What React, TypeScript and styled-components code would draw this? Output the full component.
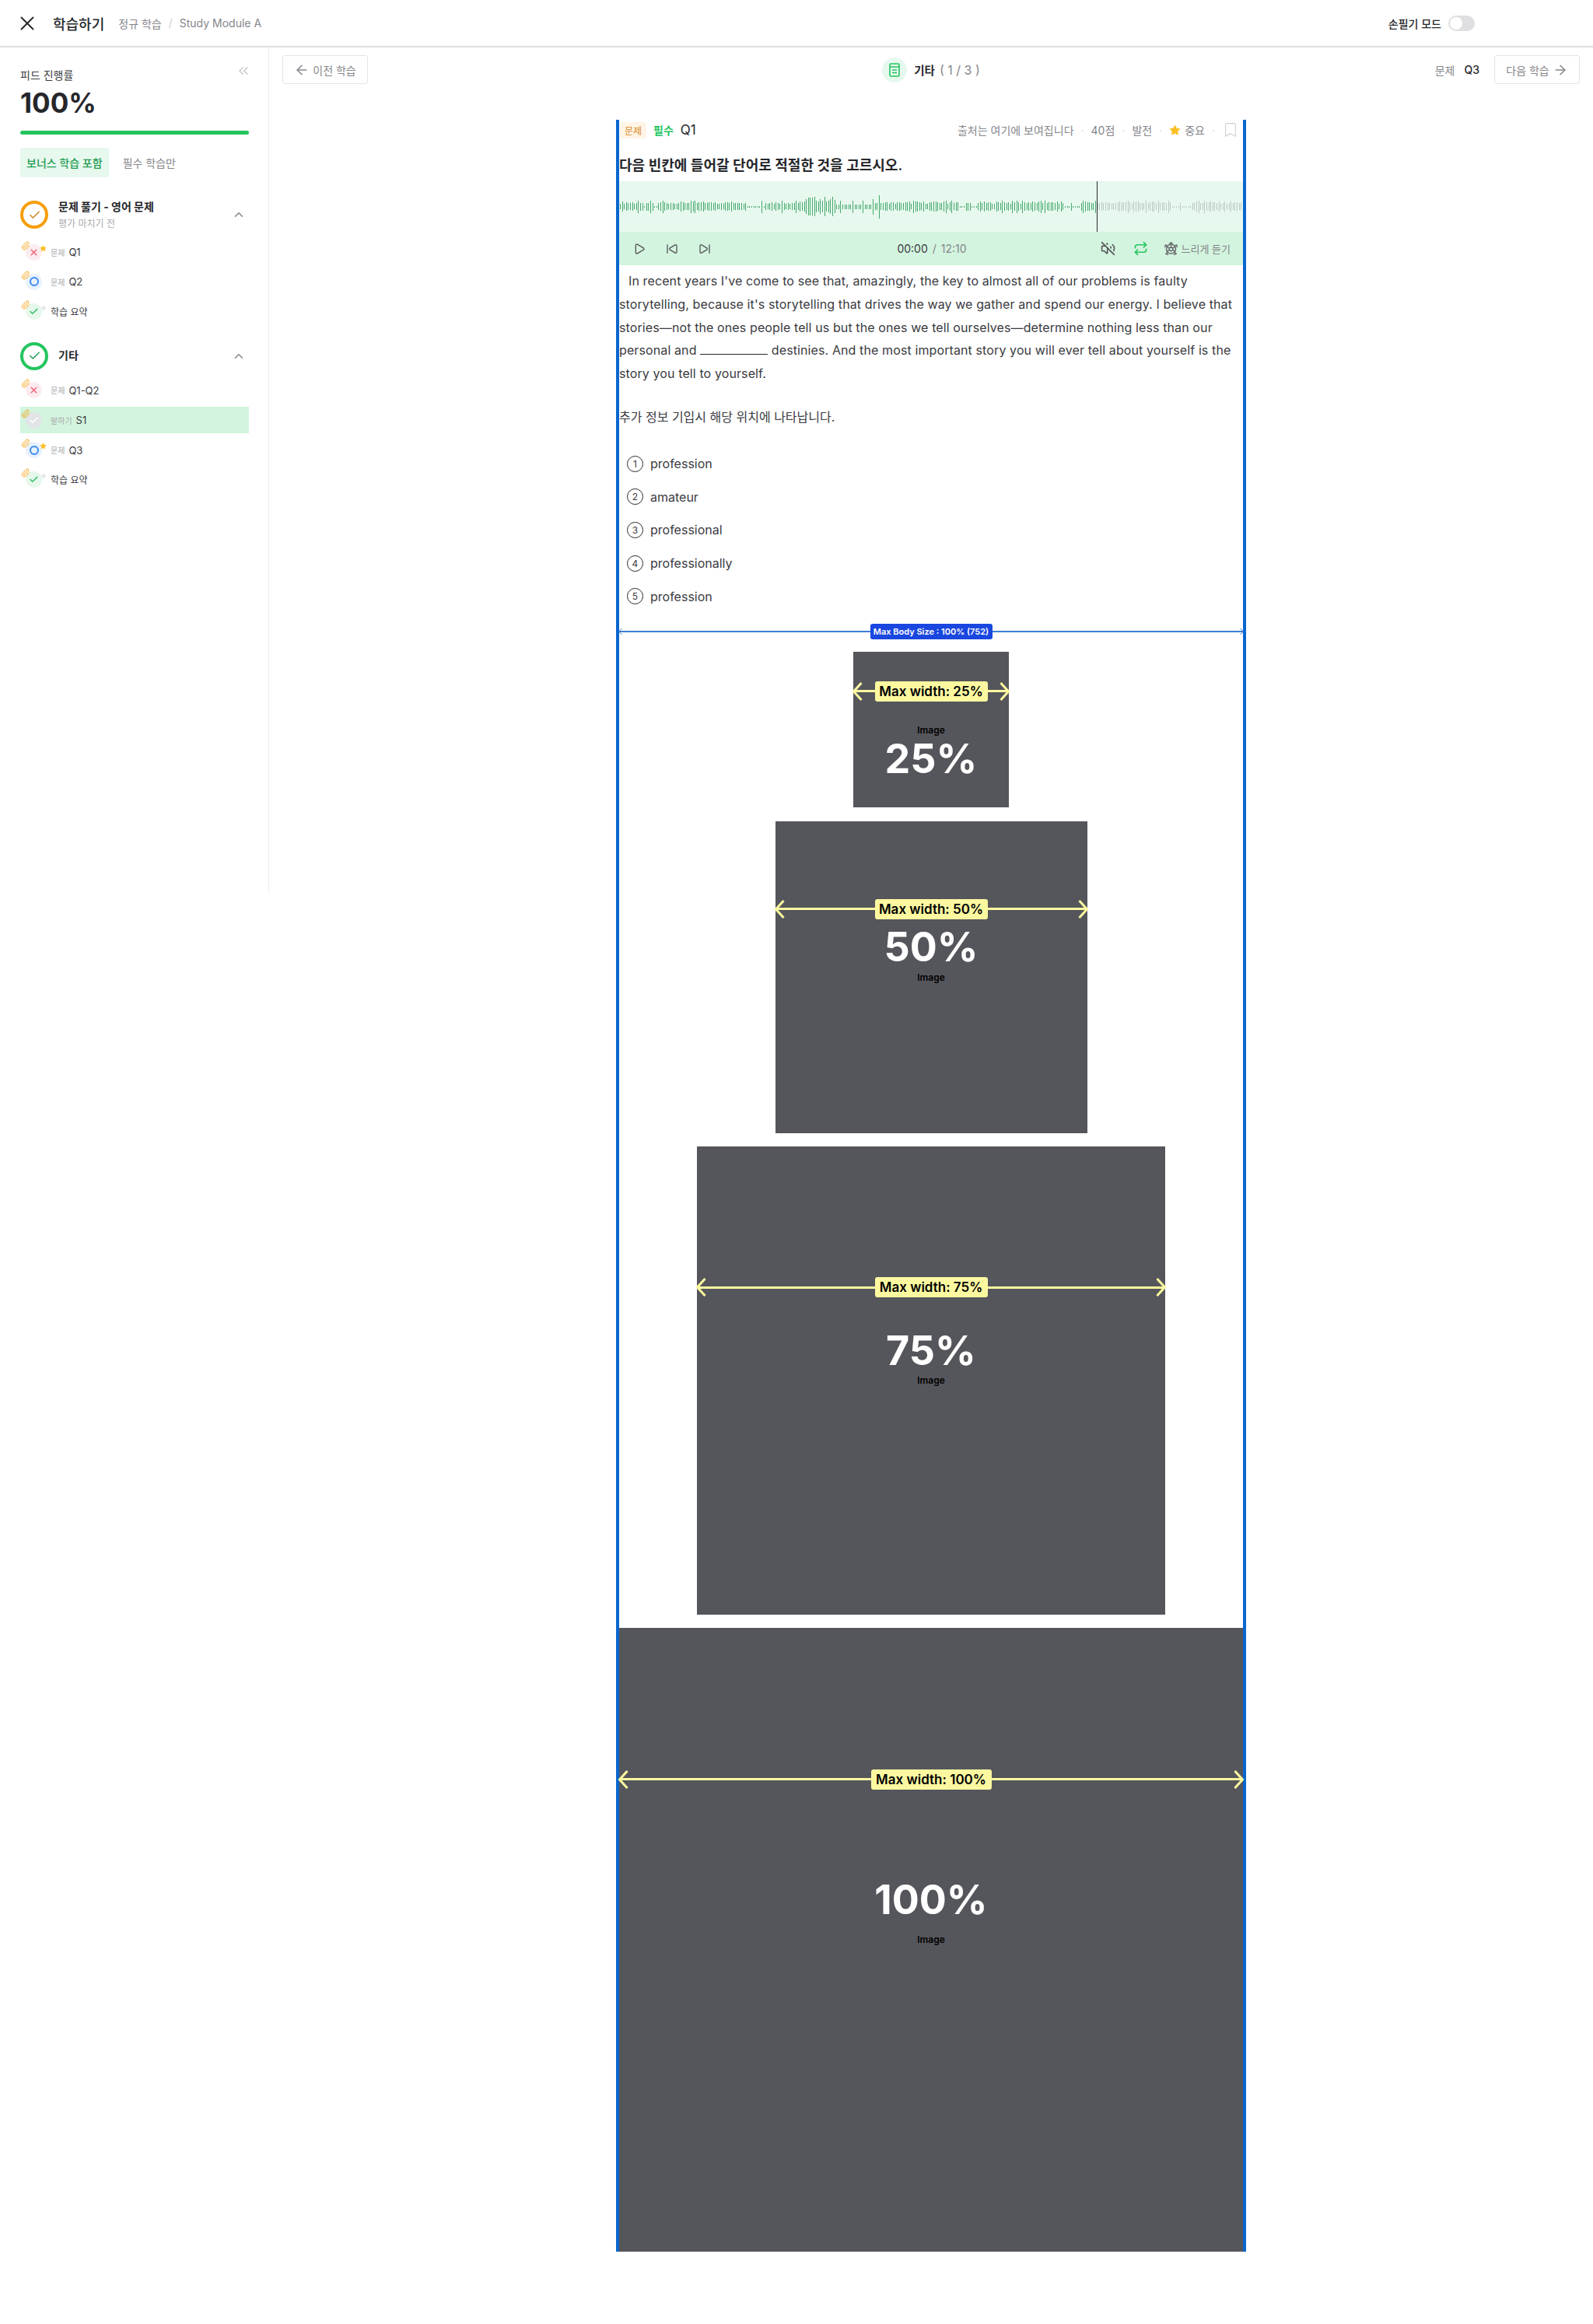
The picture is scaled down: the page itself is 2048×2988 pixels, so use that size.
import React from "react";
import styled, { createGlobalStyle } from "styled-components";
import {
  ArrowLeft,
  ArrowRight,
  Bookmark,
  Check,
  ChevronsLeft,
  ChevronUp,
  Paperclip,
  Play,
  Plus,
  Repeat,
  SkipBack,
  SkipForward,
  Star,
  VolumeOff,
  X,
} from "lucide-react";

const colors = {
  dark: "#26272b",
  text: "#3a3b3f",
  gray: "#85868b",
  light: "#a9aaae",
  line: "#e4e4e6",
  green: "#22c55e",
  greenText: "#1f9d50",
  mint: "#e7f8ee",
  mintStrong: "#d3f4de",
  orange: "#f59e0b",
  yellow: "#fbbf24",
  image: "#55565b",
  frame: "#0a66cf",
  note: "#fbf8a0",
};

const GlobalStyle = createGlobalStyle`
  html, body {
    margin: 0;
    padding: 0;
    background: #fff;
  }
  body {
    font-family: Inter, "Noto Sans CJK KR", sans-serif;
    color: ${colors.dark};
  }
  * {
    box-sizing: border-box;
  }
`;

const Page = styled.div`
  width: 2048px;
  min-height: 2988px;
`;

/* top header */
const Header = styled.header`
  display: flex;
  align-items: center;
  height: 61px;
  padding: 0 152px 0 20px;
  border-bottom: 2px solid #dedee0;
`;

const CloseButton = styled.span`
  display: flex;
  color: ${colors.dark};
  margin-right: 18px;
`;

const PageTitle = styled.h1`
  margin: 0 18px 0 0;
  font-size: 18px;
  font-weight: 500;
`;

const Crumb = styled.span`
  font-size: 14px;
  color: ${colors.gray};
`;

const CrumbDivider = styled.span`
  margin: 0 9px;
  font-size: 14px;
  color: #d0d0d3;
`;

const NoteMode = styled.label`
  display: flex;
  align-items: center;
  gap: 9px;
  margin-left: auto;
  font-size: 14px;
  font-weight: 500;
`;

const Toggle = styled.span`
  display: flex;
  align-items: center;
  width: 34px;
  height: 20px;
  padding: 2px;
  border-radius: 10px;
  background: #dfdfe1;

  &::before {
    content: "";
    width: 16px;
    height: 16px;
    border-radius: 50%;
    background: #fff;
  }
`;

const Layout = styled.div`
  display: flex;
  align-items: flex-start;
`;

/* left sidebar */
const Sidebar = styled.aside`
  flex: 0 0 346px;
  height: 1088px;
  padding: 20px 25px 0 26px;
  border-right: 1px solid #efeff0;
`;

const ProgressHead = styled.div`
  display: flex;
  justify-content: space-between;
  height: 26px;
  color: ${colors.text};
`;

const ProgressLabel = styled.span`
  margin-top: 6px;
  font-size: 14px;
  line-height: 20px;
`;

const CollapseIcon = styled.span`
  display: flex;
  margin-right: -3px;
  color: #c4c5c9;
`;

const ProgressValue = styled.div`
  margin-top: 5px;
  font-size: 35px;
  line-height: 40px;
  font-weight: 700;
`;

const ProgressTrack = styled.div`
  height: 5px;
  margin-top: 16px;
  border-radius: 3px;
  background: ${colors.green};
`;

const Tabs = styled.div`
  display: flex;
  gap: 18px;
  margin-top: 17px;
`;

const Tab = styled.span<{ $active?: boolean }>`
  display: flex;
  align-items: center;
  height: 38px;
  padding: ${(p) => (p.$active ? "0 8px" : "0")};
  border-radius: 3px;
  font-size: 14px;
  font-weight: ${(p) => (p.$active ? 500 : 400)};
  color: ${(p) => (p.$active ? colors.greenText : colors.gray)};
  background: ${(p) => (p.$active ? colors.mint : "transparent")};
`;

const Section = styled.section<{ $gap: number }>`
  margin-top: ${(p) => p.$gap}px;
`;

const SectionHead = styled.div`
  display: flex;
  align-items: center;
  gap: 13px;
  height: 36px;
`;

const StatusRing = styled.span<{ $tone: string; $check: string }>`
  display: flex;
  align-items: center;
  justify-content: center;
  width: 36px;
  height: 36px;
  border: 4px solid ${(p) => p.$tone};
  border-radius: 50%;
  color: ${(p) => p.$check};
`;

const SectionText = styled.div`
  flex: 1;
  margin-top: -1px;
`;

const SectionTitle = styled.div`
  font-size: 14px;
  line-height: 20px;
  font-weight: 700;
`;

const SectionSub = styled.div`
  margin-top: 4px;
  font-size: 12px;
  line-height: 16px;
  color: ${colors.light};
`;

const SectionChevron = styled.span`
  display: flex;
  margin-right: 4px;
  color: ${colors.gray};
`;

const RowList = styled.div<{ $top: number }>`
  display: flex;
  flex-direction: column;
  gap: 4.4px;
  margin-top: ${(p) => p.$top}px;
`;

const Row = styled.div<{ $active?: boolean }>`
  display: flex;
  align-items: center;
  height: 34px;
  padding-left: 7px;
  background: ${(p) => (p.$active ? colors.mintStrong : "transparent")};
`;

const RowIcon = styled.span<{ $bg: string; $fg: string }>`
  position: relative;
  display: flex;
  align-items: center;
  justify-content: center;
  flex: 0 0 21px;
  height: 21px;
  margin-right: 11px;
  border-radius: 50%;
  background: ${(p) => p.$bg};
  color: ${(p) => p.$fg};
`;

const RingMark = styled.span`
  width: 12px;
  height: 12px;
  border: 2.5px solid #3b8bf0;
  border-radius: 50%;
`;

const ClipBadge = styled.span`
  position: absolute;
  left: -6px;
  top: -4px;
  display: flex;
  color: ${colors.orange};
`;

const CornerBadge = styled.span<{ $color: string }>`
  position: absolute;
  left: 18px;
  top: 1px;
  display: flex;
  color: ${(p) => p.$color};
`;

const RowKind = styled.span`
  margin-right: 5px;
  font-size: 10px;
  color: ${colors.light};
`;

const RowName = styled.span<{ $plain?: boolean }>`
  font-size: ${(p) => (p.$plain ? 12 : 13)}px;
  color: ${colors.text};
`;

/* main column */
const Main = styled.main`
  flex: 1;
  min-width: 0;
  padding-top: 10px;
`;

const TopBar = styled.div`
  display: grid;
  grid-template-columns: 1fr auto 1fr;
  align-items: center;
  height: 37px;
  padding: 0 17px;
`;

const NavButton = styled.button`
  display: flex;
  align-items: center;
  justify-content: center;
  gap: 4px;
  width: 110px;
  height: 37px;
  padding: 0;
  border: 1px solid ${colors.line};
  border-radius: 3px;
  background: #fff;
  font-family: inherit;
  font-size: 14px;
  color: ${colors.gray};
`;

const Position = styled.div`
  display: flex;
  align-items: center;
  font-size: 14.5px;
`;

const PositionIcon = styled.span`
  display: flex;
  align-items: center;
  justify-content: center;
  width: 32px;
  height: 32px;
  margin-right: 9px;
  border-radius: 50%;
  background: ${colors.mint};
`;

const PositionName = styled.span`
  font-weight: 600;
`;

const PositionCount = styled.span`
  margin-left: 6px;
  font-size: 16px;
  color: ${colors.gray};
`;

const NextGroup = styled.div`
  display: flex;
  align-items: center;
  justify-content: flex-end;
`;

const NextKind = styled.span`
  margin-right: 12px;
  font-size: 14px;
  color: ${colors.gray};
`;

const NextName = styled.span`
  margin-right: 19px;
  font-size: 14px;
  font-weight: 500;
`;

const QuestionFrame = styled.article`
  width: 810px;
  margin: 46px auto 0;
  border-left: 4px solid ${colors.frame};
  border-right: 4px solid ${colors.frame};
`;

const MetaRow = styled.div`
  display: flex;
  align-items: center;
  height: 26px;
  padding: 0 5px 0 1px;
`;

const KindTag = styled.span`
  display: flex;
  align-items: center;
  justify-content: center;
  width: 34px;
  height: 21px;
  margin-right: 9px;
  border-radius: 3px;
  background: #fff4e6;
  font-size: 12px;
  color: #d98a1f;
`;

const RequiredTag = styled.span`
  margin-right: 9px;
  font-size: 14px;
  font-weight: 600;
  color: ${colors.green};
`;

const QuestionNo = styled.span`
  font-size: 17px;
`;

const MetaInfo = styled.div`
  display: flex;
  align-items: center;
  margin-left: auto;
  font-size: 14px;
  color: ${colors.gray};
`;

const MetaDot = styled.span`
  margin: 0 9px;
  color: #d8d8da;
`;

const StarIcon = styled.span`
  display: flex;
  margin-right: 5px;
  color: ${colors.yellow};
`;

const BookmarkIcon = styled.span`
  display: flex;
  color: #d4d5d8;
`;

const QuestionTitle = styled.h2`
  margin: 20px 0 7px;
  font-size: 18px;
  line-height: 26px;
  font-weight: 600;
`;

const WaveBand = styled.div`
  position: relative;
  height: 65px;
  background: ${colors.mint};
`;

const WaveDrawing = styled.svg`
  display: block;
`;

const PlayHead = styled.span`
  position: absolute;
  top: 0;
  bottom: 0;
  left: 614px;
  width: 1px;
  background: #2a2b2e;
`;

const Controls = styled.div`
  display: grid;
  grid-template-columns: 1fr auto 1fr;
  align-items: center;
  height: 43px;
  padding: 0 16px 0 18px;
  background: ${colors.mintStrong};
`;

const Transport = styled.div`
  display: flex;
  align-items: center;
  gap: 26px;
  color: #55565b;
`;

const TimeText = styled.div`
  font-size: 14px;
  color: ${colors.text};
`;

const TimeTotal = styled.span`
  margin-left: 6px;
  word-spacing: 2px;
  color: ${colors.gray};
`;

const PlayerOptions = styled.div`
  display: flex;
  align-items: center;
  justify-content: flex-end;
`;

const OptionIcon = styled.span<{ $color: string; $gap: number }>`
  display: flex;
  margin-right: ${(p) => p.$gap}px;
  color: ${(p) => p.$color};
`;

const SlowLabel = styled.span`
  font-size: 13px;
  color: ${colors.gray};
`;

const Passage = styled.p`
  margin: 6px 0 0;
  font-size: 16px;
  line-height: 29.8px;
  letter-spacing: 0.11px;
  color: ${colors.text};
  text-indent: 12px;
`;

const Blank = styled.span`
  display: inline-block;
  width: 87px;
  border-bottom: 1px solid ${colors.dark};
`;

const ExtraNote = styled.p`
  margin: 25px 0 0;
  font-size: 16px;
  line-height: 30px;
  color: ${colors.text};
`;

const Choices = styled.ol`
  margin: 24px 0 0;
  padding: 0 0 0 10px;
  list-style: none;
`;

const Choice = styled.li`
  display: flex;
  align-items: center;
  gap: 9px;
  height: 42.6px;
  font-size: 16px;
  color: ${colors.text};
`;

const ChoiceNumber = styled.span`
  display: flex;
  align-items: center;
  justify-content: center;
  width: 21px;
  height: 21px;
  border: 1.6px solid ${colors.dark};
  border-radius: 50%;
  font-size: 12px;
`;

const Dimension = styled.div<{ $height: number }>`
  position: relative;
  display: flex;
  align-items: center;
  justify-content: center;
  height: ${(p) => p.$height}px;
`;

const BodyRuler = styled(Dimension)`
  margin-top: 14px;
`;

const DimensionLine = styled.span<{ $color: string; $weight: number }>`
  position: absolute;
  left: 0;
  right: 0;
  top: 50%;
  height: ${(p) => p.$weight}px;
  margin-top: ${(p) => -p.$weight / 2}px;
  background: ${(p) => p.$color};
`;

const DimensionHead = styled.svg<{ $side: "left" | "right" }>`
  position: absolute;
  top: 50%;
  transform: translateY(-50%);
  ${(p) => p.$side}: -2px;
`;

const BodyBadge = styled.span`
  position: relative;
  display: flex;
  align-items: center;
  justify-content: center;
  width: 157px;
  height: 20px;
  border-radius: 3px;
  background: #1a47e0;
  font-size: 11px;
  font-weight: 600;
  color: #fff;
`;

const WidthBadge = styled.span<{ $wide?: boolean }>`
  position: relative;
  display: flex;
  align-items: center;
  justify-content: center;
  width: ${(p) => (p.$wide ? 155 : 145)}px;
  height: 26px;
  border-radius: 3px;
  background: ${colors.note};
  font-size: 17px;
  font-weight: 600;
  color: #000;
`;

const ImageStack = styled.div`
  display: flex;
  flex-direction: column;
  align-items: center;
  gap: 17.33px;
  margin-top: 16px;
`;

const ImageBox = styled.figure<{ $width: number }>`
  position: relative;
  display: flex;
  align-items: center;
  justify-content: center;
  width: ${(p) => p.$width}%;
  aspect-ratio: 1;
  margin: 0;
  background: ${colors.image};
`;

const ImageCaption = styled.figcaption`
  font-size: 12px;
  font-weight: 600;
  color: #000;
`;

const ImagePercent = styled.span<{ $top: number }>`
  position: absolute;
  left: 0;
  right: 0;
  top: ${(p) => p.$top}px;
  text-align: center;
  font-size: 52px;
  line-height: 60px;
  font-weight: 700;
  color: #fff;
`;

const ImageMeasure = styled.div<{ $top: number }>`
  position: absolute;
  left: 0;
  right: 0;
  top: ${(p) => p.$top}px;
`;

const makeWave = () => {
  let played = "";
  let rest = "";
  const hash = (n: number) => {
    const v = Math.sin(n * 12.9898) * 43758.5453;
    return v - Math.floor(v);
  };
  for (let i = 0; i < 308; i++) {
    // snap to whole pixels so the bars stay crisp
    const x = Math.round(i * 2.6) + 1.5;
    const page = (x + 60) % 137;
    let half = 3.5 + hash(i) * 3;
    if (page > 85 && page < 110) half = hash(i) > 0.7 ? 5 : 1;
    if (hash(i + 300) > 0.92) half = 8;
    if (x > 237 && x < 279) half = 6 + hash(i) * 7;
    if (x > 279 && x < 325) half = page % 14 < 3 ? 8 : 3;
    if (Math.abs(x - 335) < 1.4) half = 15;
    if (Math.abs(x - 327) < 1.4) half = 10;
    const bar = `M${x} ${Math.round(32.5 - half)}V${Math.round(32.5 + half)}`;
    if (x < 614) played += bar;
    else rest += bar;
  }
  return { played, rest };
};

const wave = makeWave();

const DocIcon = () => (
  <svg width="14" height="18" viewBox="0 0 14 18" fill="none" stroke={colors.green} strokeWidth="1.6">
    <rect x="1" y="1" width="12" height="16" rx="1.5" />
    <path d="M1 5h12M4 9h6M4 12.5h6" />
  </svg>
);

// top view, the shell is a hexagon with spokes
const TurtleIcon = () => (
  <svg width="19" height="19" viewBox="0 0 19 19" fill="none" stroke="currentColor" strokeWidth="1.5" strokeLinejoin="round" strokeLinecap="round">
    <circle cx="9.5" cy="10" r="6" />
    <path d="M9.5 7.6l2.2 1.4v2.4l-2.2 1.4-2.2-1.4V9z" />
    <path d="M9.5 4V7.6M4.3 7.4L7.3 9M14.7 7.4L11.7 9M4.5 13.2l2.8-1.8M14.5 13.2l-2.8-1.8" />
    <path d="M8 4c-.4-2.6 3.4-2.6 3 0" />
    <path d="M4.6 6.2L2.4 4.8l-.6 2.6M14.4 6.2l2.2-1.4.6 2.6M4.8 14.6l-2 1.8 2.6.8M14.2 14.6l2 1.8-2.6.8" />
  </svg>
);

const ArrowHead = ({ side, color, w, h, stroke }: { side: "left" | "right"; color: string; w: number; h: number; stroke: number }) => {
  const tip = stroke / 2 + 1;
  const back = w - stroke / 2;
  const d = side === "left" ? `M${back} 1L${tip} ${h / 2}L${back} ${h - 1}` : `M${w - back} 1L${w - tip} ${h / 2}L${w - back} ${h - 1}`;
  return (
    <DimensionHead $side={side} width={w} height={h} viewBox={`0 0 ${w} ${h}`} fill="none" stroke={color} strokeWidth={stroke}>
      <path d={d} />
    </DimensionHead>
  );
};

type RowState = "wrong" | "right" | "done" | "current";

const rowLook: Record<RowState, { bg: string; fg: string }> = {
  wrong: { bg: "#fdecef", fg: "#f06a80" },
  right: { bg: "#e8f1fe", fg: "#3b8bf0" },
  done: { bg: "#e6f8ec", fg: "#36c06a" },
  current: { bg: "#e2e5e7", fg: "#ffffff" },
};

const StudyRow = ({ state, kind, name, corner, active }: { state: RowState; kind?: string; name: string; corner?: "star" | "plus"; active?: boolean }) => (
  <Row $active={active}>
    <RowIcon $bg={rowLook[state].bg} $fg={rowLook[state].fg}>
      <ClipBadge>
        <Paperclip size={12} strokeWidth={1.8} />
      </ClipBadge>
      {state === "wrong" && <X size={13} strokeWidth={3} />}
      {state === "right" && <RingMark />}
      {(state === "done" || state === "current") && <Check size={13} strokeWidth={3} />}
      {corner === "star" && (
        <CornerBadge $color={colors.yellow}>
          <Star size={9} fill="currentColor" strokeWidth={1} />
        </CornerBadge>
      )}
      {corner === "plus" && (
        <CornerBadge $color="#d9dadc">
          <Plus size={10} strokeWidth={3} />
        </CornerBadge>
      )}
    </RowIcon>
    {kind && <RowKind>{kind}</RowKind>}
    <RowName $plain={!kind}>{name}</RowName>
  </Row>
);

const images = [
  { width: 25, numberTop: 108, measureTop: 38, label: "Max width: 25%", number: "25%" },
  { width: 50, numberTop: 132, measureTop: 100, label: "Max width: 50%", number: "50%" },
  { width: 75, numberTop: 233, measureTop: 168, label: "Max width: 75%", number: "75%" },
  { width: 100, numberTop: 320, measureTop: 182, label: "Max width: 100%", number: "100%" },
];

const choices = ["profession", "amateur", "professional", "professionally", "profession"];

const App: React.FC = () => {
  return (
    <Page>
      <GlobalStyle />
      <Header>
        <CloseButton>
          <X size={30} strokeWidth={1.5} />
        </CloseButton>
        <PageTitle>학습하기</PageTitle>
        <Crumb>정규 학습</Crumb>
        <CrumbDivider>/</CrumbDivider>
        <Crumb>Study Module A</Crumb>
        <NoteMode>
          손필기 모드
          <Toggle />
        </NoteMode>
      </Header>

      <Layout>
        <Sidebar>
          <ProgressHead>
            <ProgressLabel>피드 진행률</ProgressLabel>
            <CollapseIcon>
              <ChevronsLeft size={20} strokeWidth={1.6} />
            </CollapseIcon>
          </ProgressHead>
          <ProgressValue>100%</ProgressValue>
          <ProgressTrack />
          <Tabs>
            <Tab $active>보너스 학습 포함</Tab>
            <Tab>필수 학습만</Tab>
          </Tabs>

          <Section $gap={30}>
            <SectionHead>
              <StatusRing $tone={colors.orange} $check="#c9851e">
                <Check size={17} strokeWidth={2} />
              </StatusRing>
              <SectionText>
                <SectionTitle>문제 풀기 - 영어 문제</SectionTitle>
                <SectionSub>평가 마치기 전</SectionSub>
              </SectionText>
              <SectionChevron>
                <ChevronUp size={18} strokeWidth={2} />
              </SectionChevron>
            </SectionHead>
            <RowList $top={13}>
              <StudyRow state="wrong" kind="문제" name="Q1" corner="star" />
              <StudyRow state="right" kind="문제" name="Q2" />
              <StudyRow state="done" name="학습 요약" corner="plus" />
            </RowList>
          </Section>

          <Section $gap={22}>
            <SectionHead>
              <StatusRing $tone={colors.green} $check="#1f9d50">
                <Check size={17} strokeWidth={2} />
              </StatusRing>
              <SectionText>
                <SectionTitle>기타</SectionTitle>
              </SectionText>
              <SectionChevron>
                <ChevronUp size={18} strokeWidth={2} />
              </SectionChevron>
            </SectionHead>
            <RowList $top={9}>
              <StudyRow state="wrong" kind="문제" name="Q1-Q2" />
              <StudyRow state="current" kind="말하기" name="S1" active />
              <StudyRow state="right" kind="문제" name="Q3" corner="star" />
              <StudyRow state="done" name="학습 요약" corner="plus" />
            </RowList>
          </Section>
        </Sidebar>

        <Main>
          <TopBar>
            <NavButton>
              <ArrowLeft size={20} strokeWidth={1.8} />
              이전 학습
            </NavButton>
            <Position>
              <PositionIcon>
                <DocIcon />
              </PositionIcon>
              <PositionName>기타</PositionName>
              <PositionCount>( 1 / 3 )</PositionCount>
            </Position>
            <NextGroup>
              <NextKind>문제</NextKind>
              <NextName>Q3</NextName>
              <NavButton>
                다음 학습
                <ArrowRight size={20} strokeWidth={1.8} />
              </NavButton>
            </NextGroup>
          </TopBar>

          <QuestionFrame>
            <MetaRow>
              <KindTag>문제</KindTag>
              <RequiredTag>필수</RequiredTag>
              <QuestionNo>Q1</QuestionNo>
              <MetaInfo>
                출처는 여기에 보여집니다
                <MetaDot>·</MetaDot>
                40점
                <MetaDot>·</MetaDot>
                발전
                <MetaDot>·</MetaDot>
                <StarIcon>
                  <Star size={15} fill="currentColor" strokeWidth={1} />
                </StarIcon>
                중요
                <MetaDot>·</MetaDot>
                <BookmarkIcon>
                  <Bookmark size={22} strokeWidth={1.4} />
                </BookmarkIcon>
              </MetaInfo>
            </MetaRow>

            <QuestionTitle>다음 빈칸에 들어갈 단어로 적절한 것을 고르시오.</QuestionTitle>

            <WaveBand>
              <WaveDrawing width="802" height="65" viewBox="0 0 802 65" fill="none" strokeWidth="1">
                <path d={wave.played} stroke="#46a96c" />
                <path d={wave.rest} stroke="#bdc8c1" />
              </WaveDrawing>
              <PlayHead />
            </WaveBand>
            <Controls>
              <Transport>
                <Play size={16} strokeWidth={2} />
                <SkipBack size={16} strokeWidth={2} />
                <SkipForward size={16} strokeWidth={2} />
              </Transport>
              <TimeText>
                00:00
                <TimeTotal>/ 12:10</TimeTotal>
              </TimeText>
              <PlayerOptions>
                <OptionIcon $color="#55565b" $gap={23}>
                  <VolumeOff size={19} strokeWidth={2} />
                </OptionIcon>
                <OptionIcon $color={colors.green} $gap={20}>
                  <Repeat size={19} strokeWidth={2} />
                </OptionIcon>
                <OptionIcon $color="#6b6c70" $gap={4}>
                  <TurtleIcon />
                </OptionIcon>
                <SlowLabel>느리게 듣기</SlowLabel>
              </PlayerOptions>
            </Controls>

            <Passage>
              In recent years I've come to see that, amazingly, the key to almost all of our problems is faulty storytelling, because it's storytelling that drives the way we gather and spend our energy. I believe that stories—not the ones people tell us but the ones we tell ourselves—determine nothing less than our personal and <Blank /> destinies. And the most important story you will ever tell about yourself is the story you tell to yourself.
            </Passage>
            <ExtraNote>추가 정보 기입시 해당 위치에 나타납니다.</ExtraNote>

            <Choices>
              {choices.map((choice, i) => (
                <Choice key={i}>
                  <ChoiceNumber>{i + 1}</ChoiceNumber>
                  {choice}
                </Choice>
              ))}
            </Choices>

            <BodyRuler $height={20}>
              <DimensionLine $color="#3e7ed4" $weight={1.5} />
              <ArrowHead side="left" color="#3e7ed4" w={6} h={10} stroke={1} />
              <ArrowHead side="right" color="#3e7ed4" w={6} h={10} stroke={1} />
              <BodyBadge>Max Body Size : 100% (752)</BodyBadge>
            </BodyRuler>

            <ImageStack>
              {images.map((image) => (
                <ImageBox key={image.width} $width={image.width}>
                  <ImageMeasure $top={image.measureTop}>
                    <Dimension $height={26}>
                      <DimensionLine $color={colors.note} $weight={3} />
                      <ArrowHead side="left" color={colors.note} w={14} h={24} stroke={3} />
                      <ArrowHead side="right" color={colors.note} w={14} h={24} stroke={3} />
                      <WidthBadge $wide={image.width === 100}>{image.label}</WidthBadge>
                    </Dimension>
                  </ImageMeasure>
                  <ImagePercent $top={image.numberTop}>{image.number}</ImagePercent>
                  <ImageCaption>Image</ImageCaption>
                </ImageBox>
              ))}
            </ImageStack>
          </QuestionFrame>
        </Main>
      </Layout>
    </Page>
  );
};

export default App;
